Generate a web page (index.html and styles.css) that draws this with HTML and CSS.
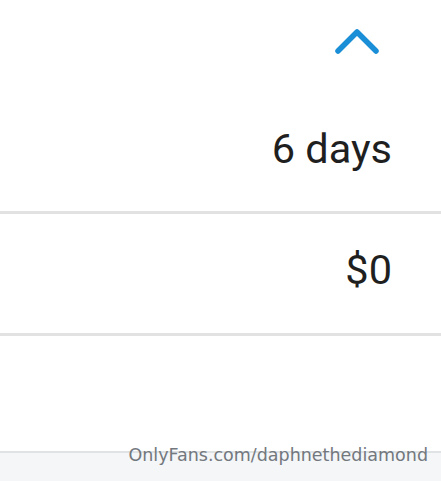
FILE: index.html
```html
<!DOCTYPE html>
<html lang="en">
<head>
  <meta charset="UTF-8">
  <meta name="viewport" content="width=device-width, initial-scale=1.0">
  <title>Subscription details</title>
  <link rel="stylesheet" href="styles.css">
</head>
<body>
  <div class="details">
    <!-- Expanded header row -->
    <div class="row row-first">
      <button class="collapse" aria-label="Collapse">
        <svg width="46" height="28" viewBox="0 0 46 28">
          <polyline points="4,23 23,4 42,23" fill="none" stroke="#1a8ed6" stroke-width="5.5" stroke-linecap="round" stroke-linejoin="round"/>
        </svg>
      </button>
      <div class="value value-first">6 days</div>
    </div>

    <div class="row row-price">
      <div class="value">$0</div>
    </div>

    <div class="row row-empty"></div>

    <div class="footer"></div>
  </div>

  <div class="watermark">OnlyFans.com/daphnethediamond</div>
</body>
</html>
```

FILE: styles.css
```css
/* General Styles */
body {
  margin: 0;
  background: #fff;
  font-family: Roboto, sans-serif;
  color: #1f1f1f;
  overflow: hidden;
}

.details {
  display: flex;
  flex-direction: column;
  height: 481px;
}

.row {
  border-bottom: 3px solid #e2e2e2;
  padding-right: 49px;
  display: flex;
  flex-direction: column;
  align-items: flex-end;
}

.row-first {
  height: 183px;
  padding-top: 28px;
}

.row-price {
  height: 87px;
  padding-top: 32px;
}

.row-empty {
  height: 115px;
  border-bottom: none;
}

.collapse {
  border: none;
  background: none;
  padding: 0;
  margin-right: 12px;
  width: 46px;
  height: 28px;
  cursor: pointer;
}

.collapse svg {
  display: block;
}

.value {
  font-size: 41.5px;
  line-height: 48px;
}

.value-first {
  margin-top: 69px;
}

.footer {
  flex: 1;
  background: #f4f6f8;
  border-top: 2px solid #dfe3e6;
}

.watermark {
  position: absolute;
  right: 13px;
  top: 445px;
  font-family: "DejaVu Sans", sans-serif;
  font-size: 17.5px;
  color: #73787e;
}
```
